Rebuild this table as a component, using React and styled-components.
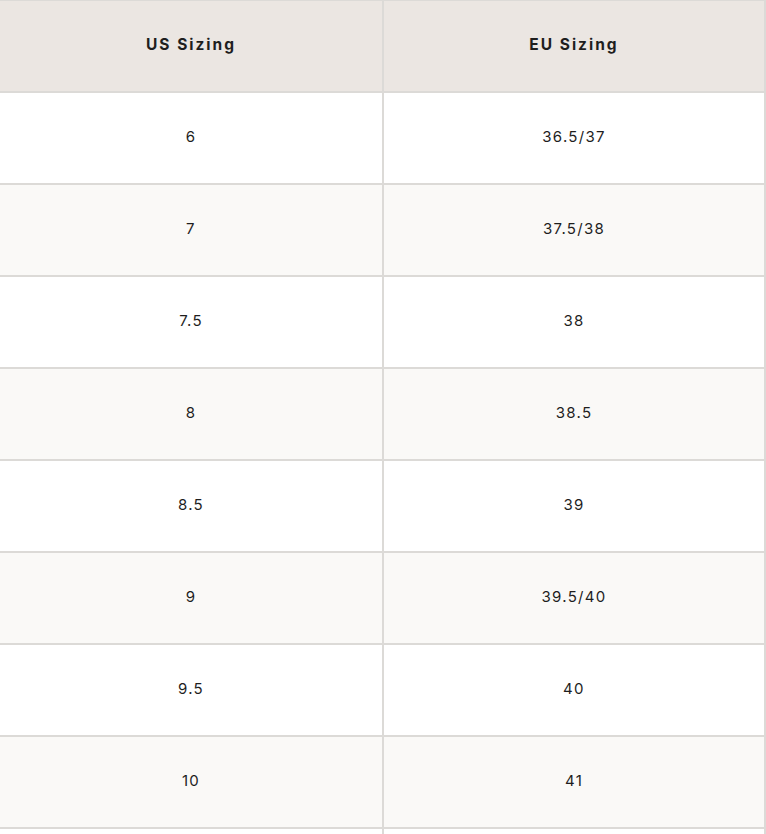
import React from "react";
import styled, { createGlobalStyle } from "styled-components";

const Global = createGlobalStyle`
  html, body { margin: 0; padding: 0; background: #ffffff; overflow: hidden; }
  body { font-family: "Inter", "Liberation Sans", sans-serif; }
`;

const Table = styled.div`
  display: grid;
  grid-template-columns: 384px 382px;
  width: 768px;
  margin-left: -2px;
  border-top: 1px solid #dcdad7;
  border-left: 2px solid #dcdad7;
  box-sizing: border-box;
`;

const Cell = styled.div`
  height: 92px;
  padding-bottom: 3px;
  box-sizing: border-box;
  border-right: 2px solid #dcdad7;
  border-bottom: 2px solid #dcdad7;
  display: flex;
  align-items: center;
  justify-content: center;
  background: ${(p) => (p.$head ? "#ebe6e2" : p.$alt ? "#faf9f7" : "#ffffff")};
  color: #1e1e1e;
  font-size: ${(p) => (p.$head ? "15.5px" : "15px")};
  font-weight: ${(p) => (p.$head ? 700 : 400)};
  letter-spacing: ${(p) => (p.$head ? "2px" : "1.3px")};
`;

const rows = [
  ["6", "36.5/37"],
  ["7", "37.5/38"],
  ["7.5", "38"],
  ["8", "38.5"],
  ["8.5", "39"],
  ["9", "39.5/40"],
  ["9.5", "40"],
  ["10", "41"],
  ["10.5", "41.5"],
];

export default function App() {
  return (
    <>
      <Global />
      <Table>
        <Cell $head>US Sizing</Cell>
        <Cell $head>EU Sizing</Cell>
        {rows.map(([us, eu], i) => (
          <React.Fragment key={us}>
            <Cell $alt={i % 2 === 1}>{us}</Cell>
            <Cell $alt={i % 2 === 1}>{eu}</Cell>
          </React.Fragment>
        ))}
      </Table>
    </>
  );
}
